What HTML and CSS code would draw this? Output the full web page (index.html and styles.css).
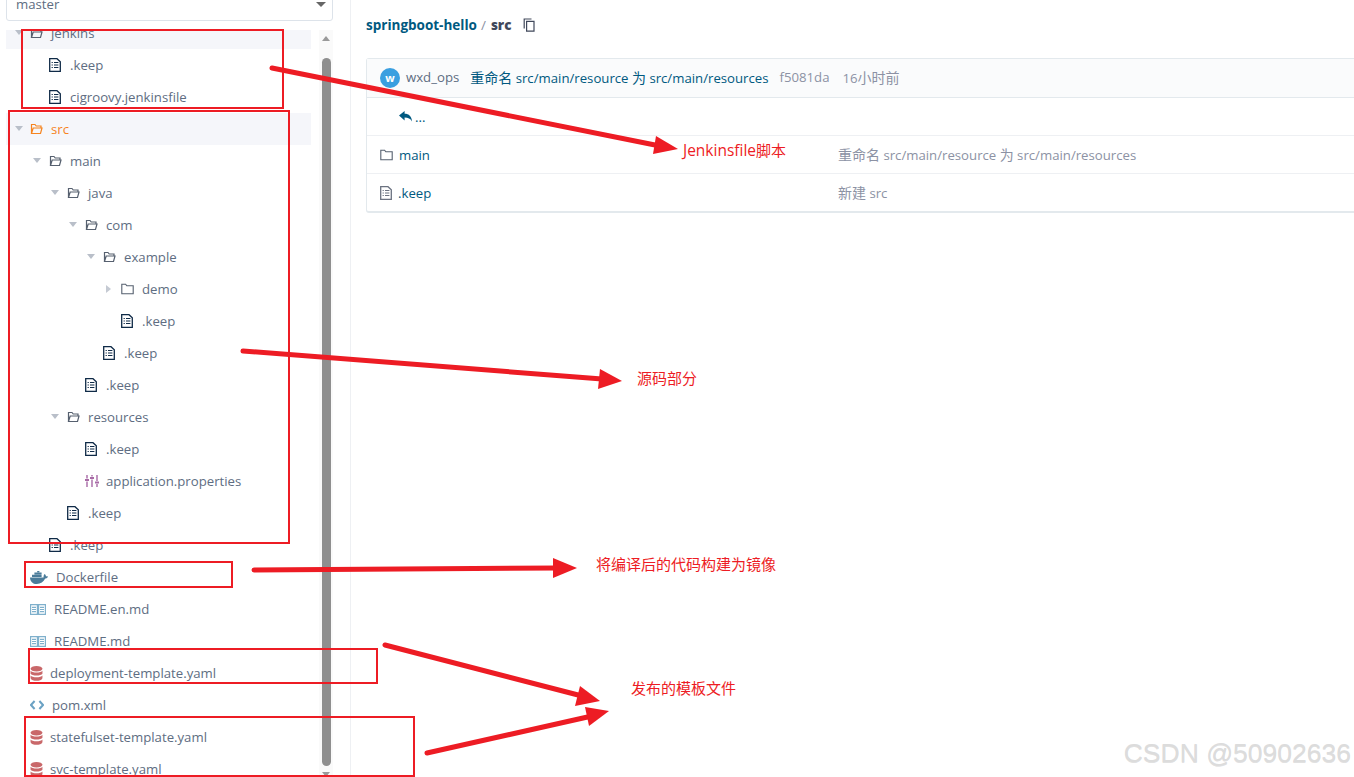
FILE: index.html
```html
<!doctype html>
<html>

<head>
<meta charset="utf-8" />
<title>springboot-hello / src</title>
<link rel="stylesheet" href="styles.css">
</head>

<body>

<svg width="0" height="0" class="defs">
	<symbol id="i-open" viewBox="0 0 13 12">
		<path d="M1.5 10.5V1.5H5L6.2 3H11V5M1.5 10.5H10.5L12 5H3.2L1.5 10.5Z" fill="none" stroke="currentColor" stroke-width="1.2" />
	</symbol>
	<symbol id="i-closed" viewBox="0 0 13 12">
		<path d="M.8 10.8V1.2H4.6L5.8 2.8H12.2V10.8Z" fill="none" stroke="currentColor" stroke-width="1.1" />
	</symbol>
	<symbol id="i-file" viewBox="0 0 12 14">
		<path d="M.7.7H8L11.3 3.8V13.3H.7Z" fill="none" stroke="currentColor" stroke-width="1.3" />
		<path d="M2.6 4.5H3.8M5 4.5H9.4M2.6 7H3.8M5 7H9.4M2.6 9.5H3.8M5 9.5H9.4" fill="none" stroke="currentColor" stroke-width="1.2" />
	</symbol>
	<symbol id="i-db" viewBox="0 0 14 14" preserveAspectRatio="none">
		<ellipse cx="7" cy="2.6" rx="6.4" ry="2.6" fill="currentColor" />
		<path d="M.6 4.4C2 6.6 12 6.6 13.4 4.4V7.2C12 9.4 2 9.4 .6 7.2ZM.6 8.8C2 11 12 11 13.4 8.8V11.4C12 14.6 2 14.6 .6 11.4Z" fill="currentColor" />
	</symbol>
	<symbol id="i-book" viewBox="0 0 16 11">
		<path d="M.6.7H7.4V10.3H.6ZM8.6.7H15.4V10.3H8.6ZM2 3.4H6M2 5.5H6M2 7.6H6M10 3.4H14M10 5.5H14M10 7.6H14" fill="none" stroke="currentColor" stroke-width="1.2" />
	</symbol>
	<symbol id="i-code" viewBox="0 0 14 10">
		<path d="M4.6 1 1 5 4.6 9M9.4 1 13 5 9.4 9" fill="none" stroke="currentColor" stroke-width="2" />
	</symbol>
	<symbol id="i-props" viewBox="0 0 14 12">
		<path d="M2 0V3.5M2 6.5V12M7 0V1.5M7 4.5V12M12 0V6M12 9V12" fill="none" stroke="currentColor" stroke-width="1.4" />
		<path d="M0 5H4M5 3H9M10 7.5H14" fill="none" stroke="currentColor" stroke-width="2" />
	</symbol>
	<symbol id="i-docker" viewBox="0 0 18 13">
		<path d="M0 6.4H13.6C13.4 5 13.8 3.8 14.6 3C15.6 3.8 16 4.6 16 5.4C16.6 5.2 17.4 5.2 18 5.8C17.4 7 16.4 7.6 15.2 7.6C13.6 11 10.6 13 6.8 13C2.6 13 .2 10.4 0 6.4Z" fill="currentColor" />
		<path d="M2 3.8H11.6V6H2ZM4.4 1.4H11.6V3.4H4.4ZM7.2 0H9.4V1.2H7.2Z" fill="currentColor" />
	</symbol>
</svg>

<div class="app">

<aside class="sidebar">
	<div class="branch">
		<span>master</span>
		<i class="caret"></i>
	</div>
	<div class="tree-wrap">
		<ul class="tree">
			<li class="row d0 hover"><i class="arrow"></i><svg class="ico folder"><use href="#i-open" /></svg><span>jenkins</span></li>
			<li class="row d1"><i class="arrow none"></i><svg class="ico file"><use href="#i-file" /></svg><span>.keep</span></li>
			<li class="row d1"><i class="arrow none"></i><svg class="ico file"><use href="#i-file" /></svg><span>cigroovy.jenkinsfile</span></li>
			<li class="row d0 hover active"><i class="arrow"></i><svg class="ico folder"><use href="#i-open" /></svg><span>src</span></li>
			<li class="row d1"><i class="arrow"></i><svg class="ico folder"><use href="#i-open" /></svg><span>main</span></li>
			<li class="row d2"><i class="arrow"></i><svg class="ico folder"><use href="#i-open" /></svg><span>java</span></li>
			<li class="row d3"><i class="arrow"></i><svg class="ico folder"><use href="#i-open" /></svg><span>com</span></li>
			<li class="row d4"><i class="arrow"></i><svg class="ico folder"><use href="#i-open" /></svg><span>example</span></li>
			<li class="row d5"><i class="arrow shut"></i><svg class="ico folder"><use href="#i-closed" /></svg><span>demo</span></li>
			<li class="row d5"><i class="arrow none"></i><svg class="ico file"><use href="#i-file" /></svg><span>.keep</span></li>
			<li class="row d4"><i class="arrow none"></i><svg class="ico file"><use href="#i-file" /></svg><span>.keep</span></li>
			<li class="row d3"><i class="arrow none"></i><svg class="ico file"><use href="#i-file" /></svg><span>.keep</span></li>
			<li class="row d2"><i class="arrow"></i><svg class="ico folder"><use href="#i-open" /></svg><span>resources</span></li>
			<li class="row d3"><i class="arrow none"></i><svg class="ico file"><use href="#i-file" /></svg><span>.keep</span></li>
			<li class="row d3"><i class="arrow none"></i><svg class="ico props"><use href="#i-props" /></svg><span>application.properties</span></li>
			<li class="row d2"><i class="arrow none"></i><svg class="ico file"><use href="#i-file" /></svg><span>.keep</span></li>
			<li class="row d1"><i class="arrow none"></i><svg class="ico file"><use href="#i-file" /></svg><span>.keep</span></li>
			<li class="row d0"><i class="arrow none"></i><svg class="ico docker"><use href="#i-docker" /></svg><span>Dockerfile</span></li>
			<li class="row d0"><i class="arrow none"></i><svg class="ico book"><use href="#i-book" /></svg><span>README.en.md</span></li>
			<li class="row d0"><i class="arrow none"></i><svg class="ico book"><use href="#i-book" /></svg><span>README.md</span></li>
			<li class="row d0"><i class="arrow none"></i><svg class="ico db"><use href="#i-db" /></svg><span>deployment-template.yaml</span></li>
			<li class="row d0"><i class="arrow none"></i><svg class="ico code"><use href="#i-code" /></svg><span>pom.xml</span></li>
			<li class="row d0"><i class="arrow none"></i><svg class="ico db"><use href="#i-db" /></svg><span>statefulset-template.yaml</span></li>
			<li class="row d0"><i class="arrow none"></i><svg class="ico db"><use href="#i-db" /></svg><span>svc-template.yaml</span></li>
		</ul>
		<div class="scrollbar">
			<i class="sb-up"></i>
			<div class="sb-thumb"></div>
			<i class="sb-down"></i>
		</div>
	</div>
</aside>

<main class="content">
	<div class="crumbs">
		<a href="#" class="crumb-repo">springboot-hello</a>
		<span class="crumb-sep">/</span>
		<b class="crumb-dir">src</b>
		<svg class="copy" viewBox="0 0 12 14"><path d="M8.5 1H1.2V10.5M3.6 3.4H11V13.2H3.6Z" fill="none" stroke="currentColor" stroke-width="1.2" /></svg>
	</div>
	<div class="card">
		<div class="commit">
			<span class="avatar">w</span>
			<span class="who">wxd_ops</span>
			<a href="#" class="msg"><span class="zh">重命名</span> src/main/resource <span class="zh">为</span> src/main/resources</a>
			<span class="sha">f5081da</span>
			<span class="ago">16<span class="zh">小时前</span></span>
		</div>
		<div class="f-row up">
			<svg class="reply" viewBox="0 0 13 11"><path d="M0 4.4 5.6 0V2.8C10 2.8 12.6 5.4 13 10.4 11.4 7.8 9.2 6.6 5.6 6.6V9.4Z" fill="currentColor" /></svg>
			<span>...</span>
		</div>
		<div class="f-row">
			<span class="f-name"><svg class="ico folder"><use href="#i-closed" /></svg><a href="#">main</a></span>
			<span class="f-msg"><span class="zh">重命名</span> src/main/resource <span class="zh">为</span> src/main/resources</span>
		</div>
		<div class="f-row">
			<span class="f-name"><svg class="ico file grey"><use href="#i-file" /></svg><a href="#">.keep</a></span>
			<span class="f-msg"><span class="zh">新建</span> src</span>
		</div>
	</div>
</main>

</div>

<!-- annotations drawn over the screenshot -->
<svg class="marks" viewBox="0 0 1354 777">
	<g class="boxes">
		<rect x="22" y="30" width="261" height="78" />
		<rect x="9" y="111" width="280" height="432" />
		<rect x="25" y="562" width="207" height="25" />
		<rect x="29" y="649" width="348" height="34" />
		<rect x="25" y="717" width="389" height="59" />
	</g>
	<g class="lines">
		<line x1="272" y1="68" x2="660" y2="146" />
		<line x1="243" y1="351" x2="602" y2="379" />
		<line x1="254" y1="570" x2="558" y2="568" />
		<line x1="385" y1="645" x2="582" y2="696" />
		<line x1="427" y1="753" x2="592" y2="716" />
	</g>
	<g class="heads">
		<polygon points="678,149 653,154 656,136" />
		<polygon points="622,381 598,389 600,369" />
		<polygon points="577,568 553,578 553,558" />
		<polygon points="600,701 575,706 580,686" />
		<polygon points="609,711 589,726 585,707" />
	</g>
	<text class="note" x="683" y="156"><tspan class="latin">Jenkinsfile</tspan>脚本</text>
	<text class="note" x="637" y="384">源码部分</text>
	<text class="note" x="596" y="570">将编译后的代码构建为镜像</text>
	<text class="note" x="631" y="694">发布的模板文件</text>
</svg>

<div class="watermark">CSDN @50902636</div>

</body>

</html>
```

FILE: styles.css
```css
* {
	margin: 0;
	padding: 0;
	box-sizing: border-box;
}
html, body {
	width: 100%;
	height: 100%;
	overflow: hidden;
	background: #fff;
}
body {
	font-family: "Open Sans", "Noto Sans CJK SC", sans-serif;
	font-size: 13.2px;
	color: #5e6d82;
}
a {
	color: #005980;
	text-decoration: none;
}
ul {
	list-style: none;
}
.zh {
	font-size: 14px;
}
.defs {
	position: absolute;
}
.app {
	display: flex;
	height: 100%;
}

/* sidebar */
.sidebar {
	width: 351px;
	flex-shrink: 0;
	border-right: 1px solid #eef0f3;
	padding: 0 17px 0 6px;
	display: flex;
	flex-direction: column;
	height: 100%;
}
.branch {
	height: 34px;
	margin-top: -13px;
	flex-shrink: 0;
	border: 1px solid #dde3ea;
	border-radius: 3px;
	padding: 0 6px 0 9px;
	display: flex;
	align-items: center;
	justify-content: space-between;
}
.caret {
	border: 5px solid transparent;
	border-top: 5px solid #666;
	border-bottom: 0;
}
.tree-wrap {
	flex: 1;
	min-height: 0;
	margin-top: 9px;
	display: flex;
	overflow: hidden;
}
.tree {
	width: 305px;
	margin-top: -13px;
	flex-shrink: 0;
}
.row {
	height: 32px;
	display: flex;
	align-items: center;
	white-space: nowrap;
}
.row.hover {
	background: #f5f6fa;
}
.row.active, .row.active .ico {
	color: #f6841f;
}
.d0 { padding-left: 9px; }
.d1 { padding-left: 27px; }
.d2 { padding-left: 45px; }
.d3 { padding-left: 63px; }
.d4 { padding-left: 81px; }
.d5 { padding-left: 99px; }
.arrow {
	width: 16px;
	height: 6px;
	flex-shrink: 0;
}
.d0 .arrow {
	width: 15px;
}
.arrow::before {
	content: "";
	display: block;
	width: 0;
	height: 0;
	border: 4px solid transparent;
	border-top: 5px solid #b9bfc9;
	border-bottom: 0;
}
.arrow.shut::before {
	border: 4px solid transparent;
	border-left: 5px solid #c5cad3;
	border-right: 0;
	margin-left: 1px;
	margin-top: -1px;
}
.arrow.none::before {
	display: none;
}
.ico {
	flex-shrink: 0;
	color: #56606f;
	margin-right: 8px;
}
.ico.folder {
	width: 13px;
	height: 12px;
}
.ico.file {
	width: 12px;
	height: 14px;
	color: #0f2a47;
	margin-right: 9px;
}
.ico.file.grey {
	color: #6b7280;
}
.ico.docker {
	width: 18px;
	height: 13px;
	color: #4b7c9a;
}
.ico.book {
	width: 16px;
	height: 11px;
	color: #7fb0cc;
}
.ico.db {
	width: 13px;
	height: 15px;
	color: #c9686a;
	margin-right: 7px;
}
.ico.code {
	width: 14px;
	height: 10px;
	color: #6ba2c4;
}
.ico.props {
	width: 14px;
	height: 12px;
	color: #a86aa6;
	margin-right: 7px;
}
.scrollbar {
	width: 14px;
	margin-left: 8px;
	flex-shrink: 0;
	background: #fafafa;
	display: flex;
	flex-direction: column;
	align-items: center;
}
.sb-up, .sb-down {
	width: 0;
	height: 0;
	border: 4px solid transparent;
	flex-shrink: 0;
}
.sb-up {
	border-bottom: 5px solid #9a9a9a;
	border-top: 0;
	margin-top: 6px;
	margin-bottom: 17px;
}
.sb-down {
	border-top: 5px solid #9a9a9a;
	border-bottom: 0;
	margin-top: 6px;
}
.sb-thumb {
	width: 9px;
	flex: 1;
	background: #8f8f8f;
	border-radius: 5px;
}

/* main panel */
.content {
	flex: 1;
	min-width: 0;
	overflow: hidden;
	padding: 0 0 0 15px;
}
.crumbs {
	height: 58px;
	padding-bottom: 8px;
	display: flex;
	align-items: center;
	gap: 4px;
	font-weight: 700;
	font-size: 13.5px;
}
.crumb-sep {
	font-weight: 400;
	color: #8c92a4;
	margin-right: 1px;
}
.crumb-dir {
	color: #40485b;
}
.copy {
	width: 12px;
	height: 14px;
	margin-left: 8px;
	color: #40485b;
}
.card {
	width: 1100px;
	border: 1px solid #e3e9ed;
	border-bottom-width: 2px;
	border-radius: 3px;
}
.commit {
	height: 39px;
	padding: 0 0 2px 13px;
	background: #fafbfc;
	border-bottom: 1px solid #e3e9ed;
	display: flex;
	align-items: center;
}
.avatar {
	width: 20px;
	height: 20px;
	border-radius: 50%;
	background: #3a9fe0;
	color: #fff;
	font-size: 11px;
	font-weight: 700;
	text-align: center;
	line-height: 20px;
	margin: 2px 6px 0 0;
}
.who {
	margin-right: 11px;
}
.msg {
	margin-right: 11px;
}
.sha {
	color: #8c92a4;
	margin-right: 13px;
}
.ago {
	color: #8c92a4;
}
.f-row {
	height: 38px;
	border-bottom: 1px solid #eef0f3;
	display: flex;
	align-items: center;
	padding-left: 13px;
}
.f-row:last-child {
	height: 37px;
	border-bottom: 0;
}
.f-row.up {
	padding-left: 32px;
	gap: 3px;
	color: #005980;
}
.reply {
	width: 13px;
	height: 11px;
}
.f-name {
	width: 458px;
	display: flex;
	align-items: center;
}
.f-name .ico {
	margin-right: 6px;
}
.f-msg {
	color: #8c92a4;
	padding-bottom: 2px;
}

/* annotations */
.marks {
	position: absolute;
	left: 0;
	top: 0;
	width: 1354px;
	height: 777px;
}
.boxes rect {
	fill: none;
	stroke: #ed1c24;
	stroke-width: 2;
}
.lines line {
	stroke: #ed1c24;
	stroke-width: 5;
	stroke-linecap: round;
}
.heads polygon {
	fill: #ed1c24;
}
.note {
	fill: #ed1c24;
	font-family: "Open Sans", "Noto Sans CJK SC", sans-serif;
	font-size: 15px;
}
.note .latin {
	font-size: 15.5px;
}
.watermark {
	position: absolute;
	right: 3px;
	bottom: 9px;
	font-family: "Liberation Sans", sans-serif;
	font-size: 26.5px;
	line-height: 30px;
	color: #dcdcdc;
	text-shadow: 0 1px 0 rgba(150, 150, 150, .3);
	white-space: nowrap;
}
```
